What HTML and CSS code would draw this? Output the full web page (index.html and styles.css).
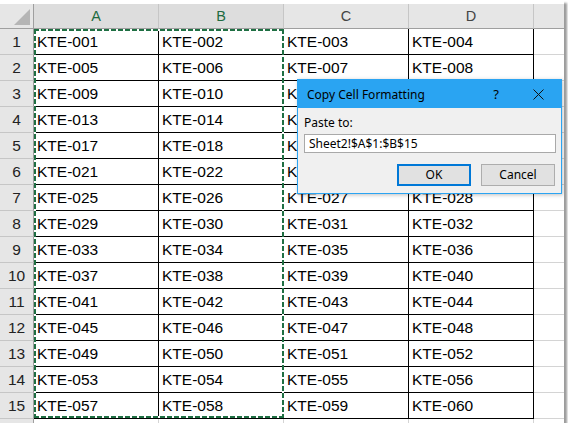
FILE: index.html
```html
<!DOCTYPE html>
<html>
<head>
<meta charset="utf-8">
<link rel="stylesheet" href="styles.css">
</head>
<body>
<div class="sheet">
  <div class="grid">
    <div class="corner"><span class="tri"></span></div>
    <div class="colh sel">A</div><div class="colh sel">B</div><div class="colh">C</div><div class="colh">D</div><div class="colh last"></div>

    <div class="rowh">1</div><div class="c">KTE-001</div><div class="c">KTE-002</div><div class="c">KTE-003</div><div class="c">KTE-004</div><div class="e"></div>
    <div class="rowh">2</div><div class="c">KTE-005</div><div class="c">KTE-006</div><div class="c">KTE-007</div><div class="c">KTE-008</div><div class="e"></div>
    <div class="rowh">3</div><div class="c">KTE-009</div><div class="c">KTE-010</div><div class="c">KTE-011</div><div class="c">KTE-012</div><div class="e"></div>
    <div class="rowh">4</div><div class="c">KTE-013</div><div class="c">KTE-014</div><div class="c">KTE-015</div><div class="c">KTE-016</div><div class="e"></div>
    <div class="rowh">5</div><div class="c">KTE-017</div><div class="c">KTE-018</div><div class="c">KTE-019</div><div class="c">KTE-020</div><div class="e"></div>
    <div class="rowh">6</div><div class="c">KTE-021</div><div class="c">KTE-022</div><div class="c">KTE-023</div><div class="c">KTE-024</div><div class="e"></div>
    <div class="rowh">7</div><div class="c">KTE-025</div><div class="c">KTE-026</div><div class="c">KTE-027</div><div class="c">KTE-028</div><div class="e"></div>
    <div class="rowh">8</div><div class="c">KTE-029</div><div class="c">KTE-030</div><div class="c">KTE-031</div><div class="c">KTE-032</div><div class="e"></div>
    <div class="rowh">9</div><div class="c">KTE-033</div><div class="c">KTE-034</div><div class="c">KTE-035</div><div class="c">KTE-036</div><div class="e"></div>
    <div class="rowh">10</div><div class="c">KTE-037</div><div class="c">KTE-038</div><div class="c">KTE-039</div><div class="c">KTE-040</div><div class="e"></div>
    <div class="rowh">11</div><div class="c">KTE-041</div><div class="c">KTE-042</div><div class="c">KTE-043</div><div class="c">KTE-044</div><div class="e"></div>
    <div class="rowh">12</div><div class="c">KTE-045</div><div class="c">KTE-046</div><div class="c">KTE-047</div><div class="c">KTE-048</div><div class="e"></div>
    <div class="rowh">13</div><div class="c">KTE-049</div><div class="c">KTE-050</div><div class="c">KTE-051</div><div class="c">KTE-052</div><div class="e"></div>
    <div class="rowh">14</div><div class="c">KTE-053</div><div class="c">KTE-054</div><div class="c">KTE-055</div><div class="c">KTE-056</div><div class="e"></div>
    <div class="rowh">15</div><div class="c">KTE-057</div><div class="c">KTE-058</div><div class="c">KTE-059</div><div class="c">KTE-060</div><div class="e"></div>

    <div class="rowh part"></div><div class="p"></div><div class="p"></div><div class="p"></div><div class="p"></div><div class="p ep"></div>
  </div>

  <div class="marquee"></div>

  <div class="dialog">
    <div class="titlebar">
      <span class="title">Copy Cell Formatting</span>
      <span class="tbtn help">?</span>
      <span class="tbtn close">
        <svg width="11" height="11" viewBox="0 0 11 11"><path d="M0.5 0.5 L10.5 10.5 M10.5 0.5 L0.5 10.5" stroke="#111" stroke-width="1" fill="none"/></svg>
      </span>
    </div>
    <div class="dbody">
      <div class="label">Paste to:</div>
      <div class="input">Sheet2!$A$1:$B$15</div>
      <div class="buttons">
        <div class="btn ok">OK</div>
        <div class="btn">Cancel</div>
      </div>
    </div>
  </div>
</div>
</body>
</html>
```
FILE: styles.css
```css
html, body {
  margin: 0;
  padding: 0;
  background: #ffffff;
}

.sheet {
  position: relative;
  width: 564px;
  height: 423px;
  padding-top: 4px;
  box-sizing: border-box;
  background: #ffffff;
  box-shadow: 3px 3px 2px #9c9c9c;
  overflow: hidden;
  font-family: "Liberation Sans", Arial, sans-serif;
}

.grid {
  display: grid;
  grid-template-columns: 34px 125px 125px 125px 125px 30px;
  grid-template-rows: 25px repeat(15, 26px) 5px;
}

.grid > div {
  box-sizing: border-box;
}

.corner {
  position: relative;
  background: #e6e6e6;
  border-right: 1px solid #9f9f9f;
  border-bottom: 1px solid #9f9f9f;
}

.tri {
  position: absolute;
  right: 3px;
  bottom: 3px;
  width: 0;
  height: 0;
  border-left: 16px solid transparent;
  border-bottom: 16px solid #b5b5b5;
}

.colh {
  background: #e6e6e6;
  border-right: 1px solid #c6c6c6;
  border-bottom: 1px solid #9f9f9f;
  text-align: center;
  font-size: 14.5px;
  line-height: 24px;
  color: #444444;
}

.colh.sel {
  background: #dddddd;
  color: #1e6b41;
}

.colh.last {
  border-right: none;
}

.rowh {
  background: #e6e6e6;
  border-right: 1px solid #9f9f9f;
  border-bottom: 1px solid #c6c6c6;
  text-align: center;
  font-size: 15.5px;
  line-height: 25px;
  color: #222222;
}

.c {
  border-right: 1px solid #000000;
  border-bottom: 1px solid #000000;
  padding-left: 3px;
  font-size: 15.5px;
  line-height: 25px;
  color: #000000;
  white-space: nowrap;
}

.e {
  border-bottom: 1px solid #d4d4d4;
}

.p {
  border-right: 1px solid #d4d4d4;
}

.p.ep {
  border-right: none;
}

.marquee {
  position: absolute;
  left: 34px;
  top: 29px;
  width: 250px;
  height: 389px;
  background:
    repeating-linear-gradient(90deg, #1f6f43 0 5px, #ffffff 5px 7px) left top / 100% 2px no-repeat,
    repeating-linear-gradient(90deg, #1f6f43 0 5px, #ffffff 5px 7px) left bottom / 100% 2px no-repeat,
    repeating-linear-gradient(180deg, #1f6f43 0 5px, #ffffff 5px 7px) left top / 2px 100% no-repeat,
    repeating-linear-gradient(180deg, #1f6f43 0 5px, #ffffff 5px 7px) right top / 2px 100% no-repeat;
}

.dialog {
  position: absolute;
  left: 297px;
  top: 79px;
  width: 265px;
  height: 115px;
  box-sizing: border-box;
  border: 1px solid #2aa4f2;
  background: #f0f0f0;
  font-family: "Noto Sans", "Open Sans", sans-serif;
  font-size: 12px;
  color: #000000;
  box-shadow: 1px 1px 4px rgba(0, 0, 0, 0.25);
}

.titlebar {
  display: flex;
  align-items: center;
  height: 28px;
  background: #2aa4f2;
  padding-left: 9px;
}

.title {
  flex: 1;
  font-size: 12px;
  color: #000000;
}

.tbtn {
  display: flex;
  align-items: center;
  justify-content: center;
  height: 28px;
}

.help {
  width: 38px;
  font-size: 13px;
}

.close {
  width: 46px;
}

.dbody {
  display: flex;
  flex-direction: column;
  padding: 7px 5px 0 6px;
}

.label {
  line-height: 16px;
  height: 16px;
}

.input {
  margin-top: 3px;
  height: 19px;
  box-sizing: border-box;
  border: 1px solid #a9a9a9;
  background: #ffffff;
  padding-left: 4px;
  line-height: 17px;
}

.buttons {
  display: flex;
  justify-content: flex-end;
  gap: 10px;
  margin-top: 11px;
  padding-right: 1px;
}

.btn {
  width: 74px;
  height: 22px;
  box-sizing: border-box;
  border: 1px solid #adadad;
  background: #e1e1e1;
  text-align: center;
  line-height: 20px;
}

.btn.ok {
  border: 2px solid #0078d7;
  line-height: 18px;
}
```
